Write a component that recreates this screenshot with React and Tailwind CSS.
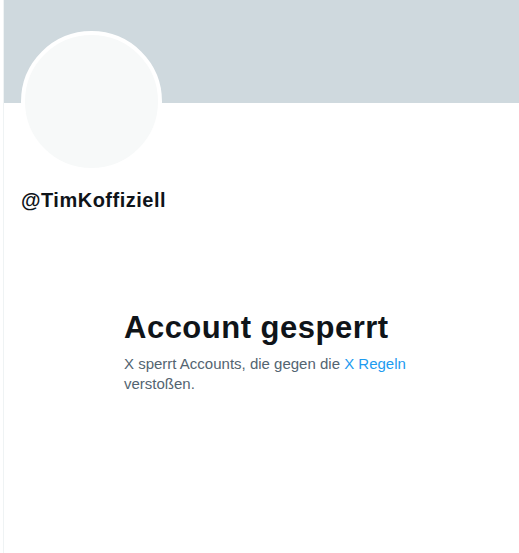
import React from 'react';

export default function App() {
  return (
    <div className="min-h-[553px] w-full bg-white font-['Liberation_Sans',Arial,sans-serif]">
      <div className="ml-[3px] flex min-h-[553px] flex-col border-l border-[#eff3f4]">
        {/* Banner */}
        <div className="h-[103px] w-full bg-[#cfd9de]" />

        {/* Profile header */}
        <div className="pl-[17px]">
          <div className="-mt-[72px] h-[141px] w-[141px] rounded-full border-4 border-white bg-[#f7f9f9]" />
          <div className="mt-4 text-[20px] font-bold leading-6 tracking-[0.5px] text-[#0f1419]">@TimKoffiziell</div>
        </div>

        {/* Empty state */}
        <div className="mt-[98px] pl-[120px]">
          <h2 className="mb-2 text-[31px] font-bold leading-9 tracking-[0.5px] text-[#0f1419]">Account gesperrt</h2>
          <p className="w-[300px] text-[15px] leading-5 text-[#536471]">
            X sperrt Accounts, die gegen die <span className="text-[#1d9bf0]">X Regeln</span> verstoßen.
          </p>
        </div>
      </div>
    </div>
  );
}
